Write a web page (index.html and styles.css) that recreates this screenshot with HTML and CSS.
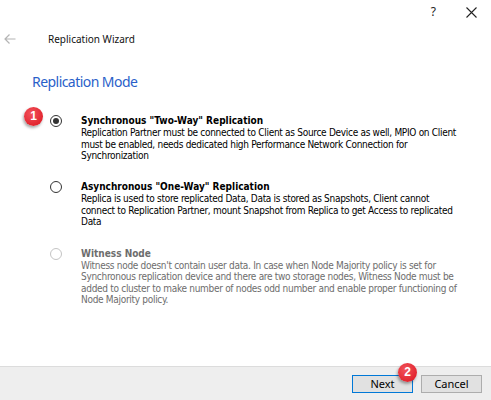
FILE: index.html
```html
<!DOCTYPE html>
<html>
<head>
<meta charset="utf-8">
<link rel="stylesheet" href="styles.css">
</head>
<body>
<div class="window">
  <div class="titlebar">
    <span class="help">?</span>
    <svg class="close" width="11" height="11" viewBox="0 0 11 11"><path d="M0.5 0.5 L10.5 10.5 M10.5 0.5 L0.5 10.5" stroke="#222" stroke-width="1.1" fill="none"/></svg>
  </div>
  <div class="nav">
    <svg class="back" width="12" height="10" viewBox="0 0 12 10"><path d="M11.5 5 H1 M5.5 0.5 L1 5 L5.5 9.5" stroke="#b4b4b4" stroke-width="1.2" fill="none"/></svg>
    <span class="nav-title">Replication Wizard</span>
  </div>
  <h1 class="heading">Replication Mode</h1>
  <div class="options">
    <div class="option">
      <span class="badge badge-1">1</span>
      <span class="radio checked"></span>
      <div class="text">
        <div class="opt-title">Synchronous "Two-Way" Replication</div>
        <div class="opt-desc">Replication Partner must be connected to Client as Source Device as well, MPIO on Client must be enabled, needs dedicated high Performance Network Connection for Synchronization</div>
      </div>
    </div>
    <div class="option">
      <span class="radio"></span>
      <div class="text">
        <div class="opt-title">Asynchronous "One-Way" Replication</div>
        <div class="opt-desc">Replica is used to store replicated Data, Data is stored as Snapshots, Client cannot connect to Replication Partner, mount Snapshot from Replica to get Access to replicated Data</div>
      </div>
    </div>
    <div class="option disabled">
      <span class="radio"></span>
      <div class="text">
        <div class="opt-title">Witness Node</div>
        <div class="opt-desc">Witness node doesn't contain user data. In case when Node Majority policy is set for Synchronous replication device and there are two storage nodes, Witness Node must be added to cluster to make number of nodes odd number and enable proper functioning of Node Majority policy.</div>
      </div>
    </div>
  </div>
  <div class="footer">
    <div class="btn-wrap">
      <button class="btn primary">Next</button>
      <span class="badge badge-2">2</span>
    </div>
    <button class="btn">Cancel</button>
  </div>
</div>
</body>
</html>
```
FILE: styles.css
```css
* { box-sizing: border-box; }
html, body { margin: 0; padding: 0; background: #fff; }
.window {
  width: 491px;
  height: 400px;
  display: flex;
  flex-direction: column;
  position: relative;
  font-family: "Noto Sans", "Open Sans", sans-serif;
  color: #000;
  overflow: hidden;
}
.titlebar {
  height: 26px;
  display: flex;
  align-items: center;
  justify-content: flex-end;
  padding-right: 14px;
  padding-bottom: 2px;
  gap: 30px;
}
.help {
  font-family: "Noto Sans", sans-serif;
  font-size: 12px;
  color: #222;
  line-height: 12px;
}
.close { display: block; }
.nav {
  height: 26px;
  display: flex;
  align-items: center;
  padding-left: 4px;
}
.back { display: block; }
.nav-title {
  margin-left: 32px;
  font-size: 10px;
  color: #111;
}
.heading {
  margin: 20px 0 0 32px;
  font-weight: normal;
  font-size: 14px;
  letter-spacing: -0.55px;
  line-height: 20px;
  color: #2a5fc9;
}
.options {
  margin-top: 22px;
  display: flex;
  flex-direction: column;
  gap: 18.5px;
  font-family: "DejaVu Sans Condensed", "DejaVu Sans", sans-serif;
}
.option {
  position: relative;
  display: flex;
  padding-left: 50px;
}
.radio {
  flex: none;
  width: 12px;
  height: 12px;
  margin-top: 1px;
  margin-right: 19px;
  border: 1px solid #333;
  border-radius: 50%;
  display: flex;
  align-items: center;
  justify-content: center;
}
.radio.checked::after {
  content: "";
  width: 6px;
  height: 6px;
  border-radius: 50%;
  background: #333;
}
.text { width: 382px; }
.opt-title {
  font-weight: bold;
  font-size: 10px;
  line-height: 13px;
}
.opt-desc {
  font-size: 10px;
  letter-spacing: -0.3px;
  line-height: 11.6px;
}
.disabled { color: #6d6d6d; }
.disabled .radio { border-color: #c4c4c4; }
.badge {
  position: absolute;
  width: 19px;
  height: 19px;
  border-radius: 50%;
  background: radial-gradient(circle at 40% 35%, #f2545c, #e2252f 70%);
  color: #fff;
  font-family: "Liberation Sans", Arial, sans-serif;
  font-weight: bold;
  font-size: 12px;
  line-height: 19px;
  text-align: center;
  box-shadow: -1px 2px 3px rgba(0,0,0,0.35);
}
.badge-1 { left: 24px; top: -7px; }
.footer {
  margin-top: auto;
  height: 34px;
  background: #eeeeee;
  border-top: 1px solid #dcdcdc;
  display: flex;
  justify-content: flex-end;
  align-items: flex-start;
  padding: 8px 9px 0 0;
  gap: 8px;
}
.btn-wrap { position: relative; }
.btn {
  display: block;
  width: 61px;
  height: 18px;
  padding: 0;
  background: #e1e1e1;
  border: 1px solid #adadad;
  font-family: "Noto Sans", sans-serif;
  font-size: 11px;
  line-height: 14px;
  color: #000;
}
.btn.primary { border-color: #0078d7; }
.badge-2 { left: 46px; top: -12px; }
```
